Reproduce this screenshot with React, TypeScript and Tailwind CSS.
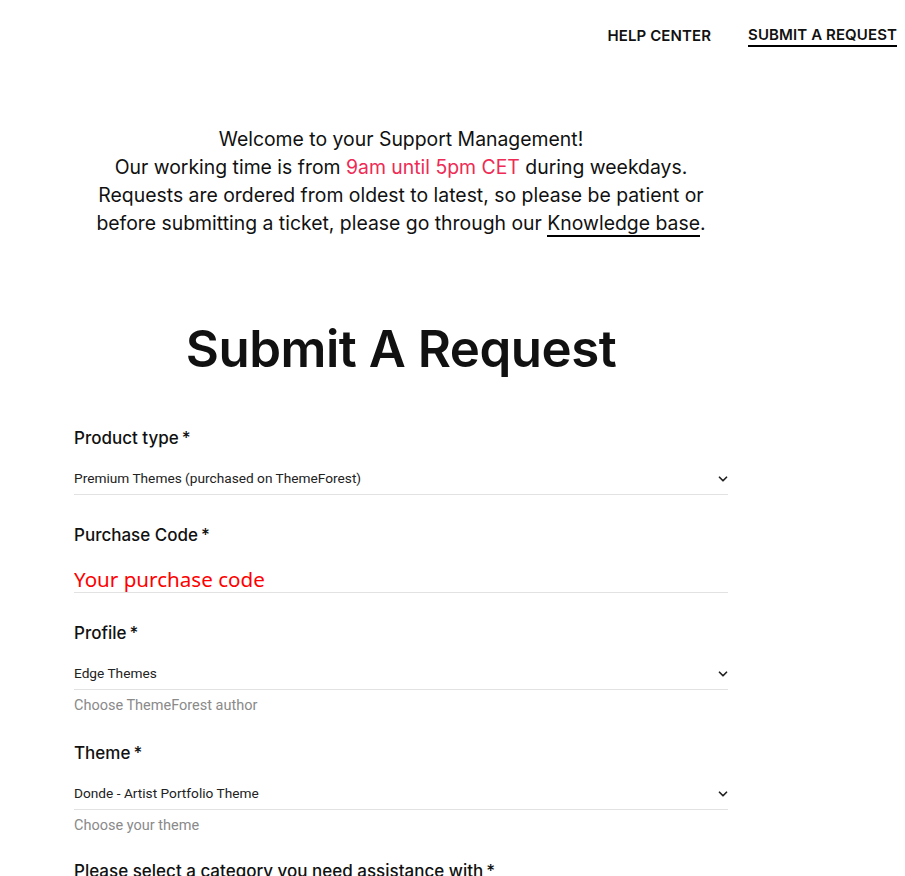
import { ChevronDown } from 'lucide-react';

const sans = "font-['Inter','Noto_Sans',sans-serif]";

function Label({ text }: { text: string }) {
  return (
    <div className={`h-[24px] leading-[24px] text-[17px] font-medium text-[#111] ${sans}`}>
      {text}
      <span className="ml-[3px]">*</span>
    </div>
  );
}

function Select({ value }: { value: string }) {
  return (
    <div className="mt-[11px] h-[34px] pt-[2px] flex items-center justify-between border-b border-[#e2e2e2] font-['Roboto',sans-serif] text-[13.7px] text-[#222]">
      <span>{value}</span>
      <ChevronDown className="w-[14px] h-[14px] mr-[-2px] text-[#222]" strokeWidth={3} />
    </div>
  );
}

function Hint({ text }: { text: string }) {
  return (
    <div className="mt-[6px] h-[20px] leading-[20px] font-['Roboto',sans-serif] text-[14.5px] text-[#8a8a8a]">
      {text}
    </div>
  );
}

export default function App() {
  return (
    <div className={`min-h-screen bg-white text-[#111] ${sans}`}>
      <nav className="flex justify-end items-center gap-[37px] pr-[8px] pt-[24px] h-[48px]">
        <a className="text-[15px] font-semibold tracking-[0.1px] leading-[20px]">HELP CENTER</a>
        <a className="text-[15px] font-semibold tracking-[0.1px] leading-[20px] border-b-2 border-black">
          SUBMIT A REQUEST
        </a>
      </nav>

      <div className="w-[654px] ml-[74px]">
        <div className="mt-[77px] text-center text-[19.4px] leading-[28px] text-[#111]">
          <p>Welcome to your Support Management!</p>
          <p>
            Our working time is from <span className="text-[#ee2a55]">9am until 5pm CET</span> during weekdays.
          </p>
          <p>Requests are ordered from oldest to latest, so please be patient or</p>
          <p>
            before submitting a ticket, please go through our{' '}
            <a className="border-b-2 border-black">Knowledge base</a>.
          </p>
        </div>

        <h1 className="mt-[82px] text-center text-[51px] leading-[60px] font-semibold tracking-[-0.5px]">
          Submit A Request
        </h1>

        <form className="mt-[47px]">
          <Label text="Product type" />
          <Select value="Premium Themes (purchased on ThemeForest)" />

          <div className="mt-[28px]">
            <Label text="Purchase Code" />
            <input
              className="mt-[10px] block w-full h-[36px] pt-[8px] border-b border-[#e2e2e2] outline-none font-['Noto_Sans',sans-serif] text-[20.6px] placeholder:text-[#f00]"
              placeholder="Your purchase code"
            />
          </div>

          <div className="mt-[28px]">
            <Label text="Profile" />
            <Select value="Edge Themes" />
            <Hint text="Choose ThemeForest author" />
          </div>

          <div className="mt-[25px]">
            <Label text="Theme" />
            <Select value="Donde - Artist Portfolio Theme" />
            <Hint text="Choose your theme" />
          </div>

          <div className="mt-[23px]">
            <Label text="Please select a category you need assistance with" />
          </div>
        </form>
      </div>
    </div>
  );
}
